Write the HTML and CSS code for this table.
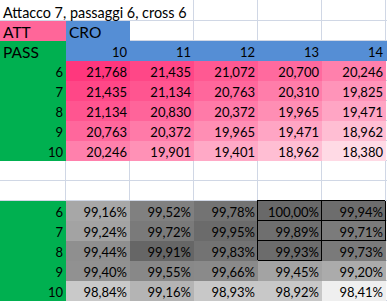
FILE: index.html
```html
<!DOCTYPE html>
<html>
<head>
<meta charset="utf-8">
<link rel="stylesheet" href="styles.css">
</head>
<body>
<div class="sheet">
  <div class="c title">Attacco 7, passaggi 6, cross 6</div>
  <div class="c"></div><div class="c"></div><div class="c"></div><div class="c"></div>

  <div class="c f pink lbl">ATT</div>
  <div class="c f blue lbl">CRO</div>
  <div class="c"></div><div class="c"></div><div class="c"></div><div class="c"></div><div class="c"></div>

  <div class="c f green lbl">PASS</div>
  <div class="c f blue n">10</div>
  <div class="c f blue n">11</div>
  <div class="c f blue n">12</div>
  <div class="c f blue n">13</div>
  <div class="c f blue n">14</div>
  <div class="c f blue"></div>

  <div class="c f green n">6</div>
  <div class="c f n" style="background:rgb(255,55,125)">21,768</div>
  <div class="c f n" style="background:rgb(255,71,135)">21,435</div>
  <div class="c f n" style="background:rgb(255,89,146)">21,072</div>
  <div class="c f n" style="background:rgb(255,106,158)">20,700</div>
  <div class="c f n" style="background:rgb(255,128,172)">20,246</div>
  <div class="c"></div>

  <div class="c f green n">7</div>
  <div class="c f n" style="background:rgb(255,71,135)">21,435</div>
  <div class="c f n" style="background:rgb(255,85,144)">21,134</div>
  <div class="c f n" style="background:rgb(255,103,156)">20,763</div>
  <div class="c f n" style="background:rgb(255,125,170)">20,310</div>
  <div class="c f n" style="background:rgb(255,148,185)">19,825</div>
  <div class="c"></div>

  <div class="c f green n">8</div>
  <div class="c f n" style="background:rgb(255,85,144)">21,134</div>
  <div class="c f n" style="background:rgb(255,100,154)">20,830</div>
  <div class="c f n" style="background:rgb(255,122,168)">20,372</div>
  <div class="c f n" style="background:rgb(255,142,180)">19,965</div>
  <div class="c f n" style="background:rgb(255,165,196)">19,471</div>
  <div class="c"></div>

  <div class="c f green n">9</div>
  <div class="c f n" style="background:rgb(255,103,156)">20,763</div>
  <div class="c f n" style="background:rgb(255,122,168)">20,372</div>
  <div class="c f n" style="background:rgb(255,142,180)">19,965</div>
  <div class="c f n" style="background:rgb(255,165,196)">19,471</div>
  <div class="c f n" style="background:rgb(255,190,211)">18,962</div>
  <div class="c"></div>

  <div class="c f green n">10</div>
  <div class="c f n" style="background:rgb(255,128,172)">20,246</div>
  <div class="c f n" style="background:rgb(255,145,182)">19,901</div>
  <div class="c f n" style="background:rgb(255,169,198)">19,401</div>
  <div class="c f n" style="background:rgb(255,190,211)">18,962</div>
  <div class="c f n" style="background:rgb(255,218,229)">18,380</div>
  <div class="c"></div>

  <div class="c"></div><div class="c"></div><div class="c"></div><div class="c"></div><div class="c"></div><div class="c"></div><div class="c"></div>
  <div class="c"></div><div class="c"></div><div class="c"></div><div class="c"></div><div class="c"></div><div class="c"></div><div class="c"></div>

  <div class="c f green n">6</div>
  <div class="c f n" style="background:#a7a7a7">99,16%</div>
  <div class="c f n" style="background:#808080">99,52%</div>
  <div class="c f n" style="background:#737373">99,78%</div>
  <div class="c f n bx" style="background:#696969">100,00%</div>
  <div class="c f n bx" style="background:#6d6d6d">99,94%</div>
  <div class="c"></div>

  <div class="c f green n">7</div>
  <div class="c f n" style="background:#a3a3a3">99,24%</div>
  <div class="c f n" style="background:#7a7a7a">99,72%</div>
  <div class="c f n" style="background:#6b6b6b">99,95%</div>
  <div class="c f n bx" style="background:#6f6f6f">99,89%</div>
  <div class="c f n bx" style="background:#7b7b7b">99,71%</div>
  <div class="c"></div>

  <div class="c f green n">8</div>
  <div class="c f n" style="background:#8f8f8f">99,44%</div>
  <div class="c f n" style="background:#666666">99,91%</div>
  <div class="c f n" style="background:#737373">99,83%</div>
  <div class="c f n bx" style="background:#6c6c6c">99,93%</div>
  <div class="c f n" style="background:#7a7a7a">99,73%</div>
  <div class="c"></div>

  <div class="c f green n">9</div>
  <div class="c f n" style="background:#919191">99,40%</div>
  <div class="c f n" style="background:#888888">99,55%</div>
  <div class="c f n" style="background:#8a8a8a">99,66%</div>
  <div class="c f n" style="background:#a3a3a3">99,45%</div>
  <div class="c f n" style="background:#ababab">99,20%</div>
  <div class="c"></div>

  <div class="c f green n">10</div>
  <div class="c f n" style="background:#c9c9c9">98,84%</div>
  <div class="c f n" style="background:#b4b4b4">99,16%</div>
  <div class="c f n" style="background:#c8c8c8">98,93%</div>
  <div class="c f n" style="background:#c8c8c8">98,92%</div>
  <div class="c f n" style="background:#efefef">98,41%</div>
  <div class="c"></div>
</div>
</body>
</html>
```

FILE: styles.css
```css
html, body {
  margin: 0;
  padding: 0;
  background: #ffffff;
}

.sheet {
  display: grid;
  grid-template-columns: 66px repeat(5, 64px) 1fr;
  grid-template-rows: 21px repeat(14, 20px);
  width: 387px;
  font-family: "Lato", "Liberation Sans", sans-serif;
  font-size: 13px;
  color: #000000;
}

.c {
  box-sizing: border-box;
  border-right: 1px solid #d0d7e5;
  border-bottom: 1px solid #d0d7e5;
  display: flex;
  align-items: flex-end;
  padding: 0 2px 0 3px;
  line-height: 15px;
  white-space: nowrap;
  overflow: visible;
}

.title {
  grid-column: span 3;
  padding-left: 3px;
  font-size: 14.4px;
}

.lbl {
  font-size: 15.5px;
  padding-left: 3px;
}

.n {
  justify-content: flex-end;
}

.f {
  border-color: transparent;
}

.pink {
  background: #ff6699;
}

.blue {
  background: #558ed5;
}

.green {
  background: #00b050;
}

.bx {
  border-right-color: #000000;
  border-bottom-color: #000000;
  box-shadow: -1px -1px 0 0 #000000;
}
```
